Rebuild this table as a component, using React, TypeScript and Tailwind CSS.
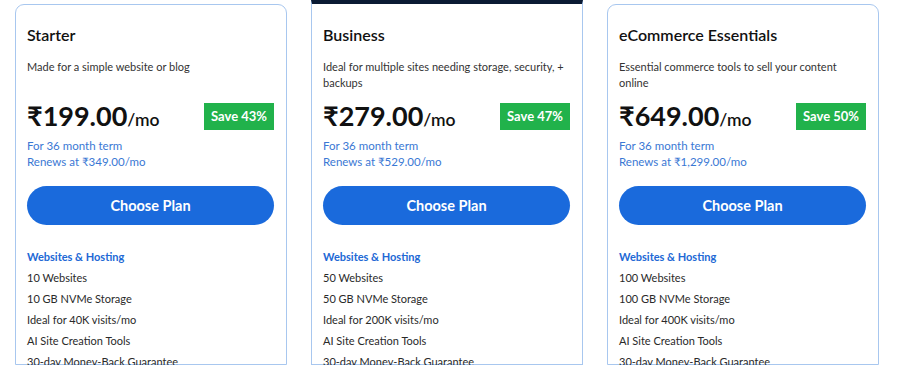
import React from "react";

type Plan = {
  name: string;
  desc: string;
  price: string;
  save: string;
  renew: string;
  features: string[];
  featured?: boolean;
};

const plans: Plan[] = [
  {
    name: "Starter",
    desc: "Made for a simple website or blog",
    price: "₹199.00",
    save: "Save 43%",
    renew: "Renews at ₹349.00/mo",
    features: ["10 Websites", "10 GB NVMe Storage", "Ideal for 40K visits/mo", "AI Site Creation Tools", "30-day Money-Back Guarantee"],
  },
  {
    name: "Business",
    desc: "Ideal for multiple sites needing storage, security, + backups",
    price: "₹279.00",
    save: "Save 47%",
    renew: "Renews at ₹529.00/mo",
    features: ["50 Websites", "50 GB NVMe Storage", "Ideal for 200K visits/mo", "AI Site Creation Tools", "30-day Money-Back Guarantee"],
    featured: true,
  },
  {
    name: "eCommerce Essentials",
    desc: "Essential commerce tools to sell your content online",
    price: "₹649.00",
    save: "Save 50%",
    renew: "Renews at ₹1,299.00/mo",
    features: ["100 Websites", "100 GB NVMe Storage", "Ideal for 400K visits/mo", "AI Site Creation Tools", "30-day Money-Back Guarantee"],
  },
];

function Card({ p }: { p: Plan }) {
  return (
    <div
      className={
        "w-[272px] shrink-0 bg-white border border-[#a8c7ef] " +
        (p.featured ? "mt-0 border-t-[4px] border-t-[#0a1a33]" : "mt-[4px] rounded-t-[9px]")
      }
    >
      <div className={"pl-[11px] pr-3 " + (p.featured ? "pt-[21px]" : "pt-[20px]")}>
        <div className="text-[16px] leading-[20px] font-semibold text-[#111]">{p.name}</div>
        <div className="mt-[14px] h-[32px] text-[11px] leading-[16px] text-[#333]">{p.desc}</div>
        <div className="mt-[12px] flex items-center justify-between h-[27px]">
          <div className="flex items-baseline text-[#111] leading-none mt-[-3px]">
            <span className="text-[27px] font-bold">{p.price}</span>
            <span className="text-[17.5px] font-semibold">/mo</span>
          </div>
          <div className="h-[27px] w-[70px] flex items-center justify-center bg-[#21b24b] text-white text-[13px] font-bold">
            {p.save}
          </div>
        </div>
        <div className="mt-[8px] text-[11.5px] leading-[16px] text-[#3a78d4]">
          <div>For 36 month term</div>
          <div>{p.renew}</div>
        </div>
        <button className="mt-[16px] w-full h-[39px] rounded-full bg-[#1a6adc] text-white text-[14.5px] font-bold">
          Choose Plan
        </button>
        <div className="mt-[21px] text-[11px] leading-[21px]">
          <div className="font-bold text-[#2168d5]">Websites &amp; Hosting</div>
          {p.features.map((f) => (
            <div key={f} className="text-[#2a2a2a]">{f}</div>
          ))}
        </div>
      </div>
    </div>
  );
}

export default function App() {
  return (
    <div
      className="w-[900px] h-[365px] overflow-hidden bg-white flex gap-[24px] pl-[15px]"
      style={{ fontFamily: "Lato, 'Noto Sans', sans-serif" }}
    >
      {plans.map((p) => (
        <Card key={p.name} p={p} />
      ))}
    </div>
  );
}
